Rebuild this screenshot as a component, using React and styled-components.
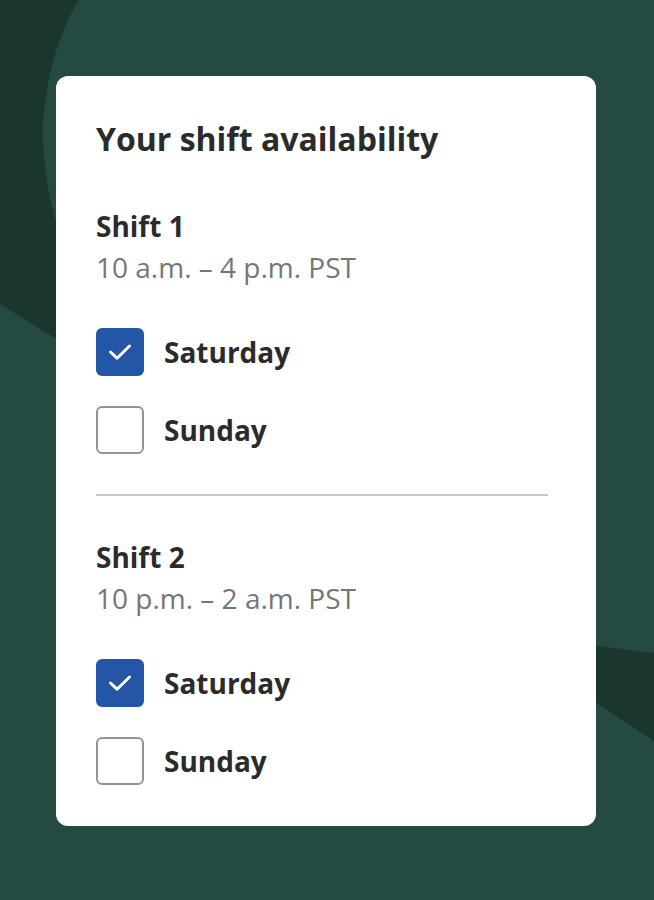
import React from "react";
import styled, { createGlobalStyle } from "styled-components";

const Global = createGlobalStyle`
  html, body { margin: 0; padding: 0; }
  body { background: #244a41; font-family: "Open Sans", "Noto Sans", sans-serif; }
`;

const Page = styled.div`
  position: relative;
  width: 654px;
  height: 900px;
  overflow: hidden;
  background: #244a41;
`;

const Backdrop = styled.svg`
  position: absolute;
  inset: 0;
  width: 654px;
  height: 900px;
`;

const Content = styled.div`
  position: relative;
  display: flex;
  justify-content: flex-start;
  padding: 76px 58px 0 56px;
`;

const Card = styled.section`
  width: 540px;
  box-sizing: border-box;
  background: #ffffff;
  border-radius: 12px;
  padding: 40px 48px 41px 40px;
  display: flex;
  flex-direction: column;
`;

const Title = styled.h1`
  margin: 0 0 44px;
  font-size: 32px;
  line-height: 46px;
  font-weight: 700;
  color: #2b2b2b;
`;

const ShiftBlock = styled.div`
  display: flex;
  flex-direction: column;
`;

const ShiftName = styled.h2`
  margin: 0;
  font-size: 28px;
  line-height: 40px;
  font-weight: 700;
  color: #2b2b2b;
`;

const ShiftTime = styled.p`
  margin: 0;
  font-size: 28px;
  line-height: 42px;
  font-weight: 400;
  color: #767676;
`;

const Options = styled.div`
  margin-top: 40px;
  display: flex;
  flex-direction: column;
  gap: 30px;
`;

const Option = styled.label`
  display: flex;
  align-items: center;
  gap: 20px;
  height: 48px;
`;

const Box = styled.span`
  width: 48px;
  height: 48px;
  box-sizing: border-box;
  border-radius: 6px;
  border: 2px solid ${(p) => (p.$checked ? "#2356a7" : "#949494")};
  background: ${(p) => (p.$checked ? "#2356a7" : "#ffffff")};
  display: flex;
  align-items: center;
  justify-content: center;
  flex-shrink: 0;
`;

const OptionLabel = styled.span`
  font-size: 28px;
  line-height: 40px;
  font-weight: 700;
  color: #2b2b2b;
`;

const Divider = styled.hr`
  margin: 40px 0 41px;
  border: none;
  height: 2px;
  background: #c8c8c8;
`;

const Check = () => (
  <svg width="48" height="48" viewBox="0 0 48 48" style={{ margin: -2 }}>
    <path
      d="M14.5 24 L21 30.2 L33.5 18"
      fill="none"
      stroke="#ffffff"
      strokeWidth="3"
      strokeLinecap="round"
      strokeLinejoin="round"
    />
  </svg>
);

const shifts = [
  { name: "Shift 1", time: "10 a.m. – 4 p.m. PST", days: [["Saturday", true], ["Sunday", false]] },
  { name: "Shift 2", time: "10 p.m. – 2 a.m. PST", days: [["Saturday", true], ["Sunday", false]] },
];

export default function App() {
  return (
    <Page>
      <Global />
      <Backdrop viewBox="0 0 654 900" aria-hidden="true">
        <rect width="654" height="900" fill="#244a41" />
        <path
          d="M0 0 L79 0 C60 30 46 75 43 125 C42 160 48 195 58 230 L58 340 L0 304 Z"
          fill="#1b352f"
        />
        <path d="M590 645 L654 653 L654 741 L590 699 Z" fill="#1b352f" />
      </Backdrop>
      <Content>
        <Card>
          <Title>Your shift availability</Title>
          {shifts.map((s, i) => (
            <React.Fragment key={s.name}>
              {i > 0 && <Divider />}
              <ShiftBlock>
                <ShiftName>{s.name}</ShiftName>
                <ShiftTime>{s.time}</ShiftTime>
                <Options>
                  {s.days.map(([d, c]) => (
                    <Option key={d}>
                      <Box $checked={c}>{c && <Check />}</Box>
                      <OptionLabel>{d}</OptionLabel>
                    </Option>
                  ))}
                </Options>
              </ShiftBlock>
            </React.Fragment>
          ))}
        </Card>
      </Content>
    </Page>
  );
}
